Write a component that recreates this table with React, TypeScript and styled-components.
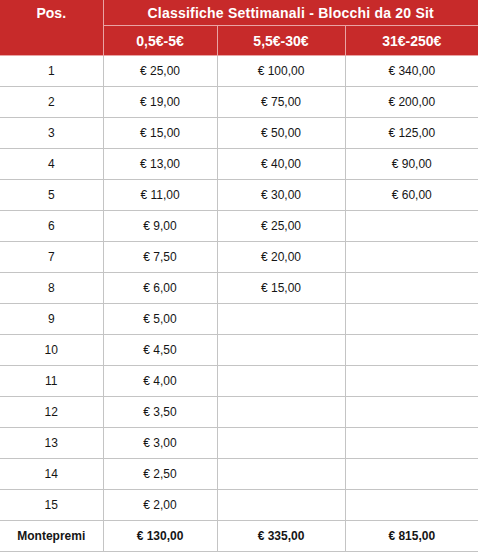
import React from "react";
import styled, { createGlobalStyle } from "styled-components";

const Global = createGlobalStyle`
  html, body { margin: 0; padding: 0; background: #ffffff; }
  body { font-family: Arial, "Liberation Sans", sans-serif; }
`;

const Table = styled.table`
  width: 478px;
  border-collapse: collapse;
  table-layout: fixed;
  font-family: Arial, "Liberation Sans", sans-serif;
`;

const HeadCell = styled.th<{ $h: number; $top?: boolean; $spacing?: number }>`
  background: #c72a2a;
  color: #ffffff;
  font-weight: bold;
  font-size: 14px;
  letter-spacing: ${(p) => p.$spacing ?? 0}px;
  text-align: center;
  vertical-align: ${(p) => (p.$top ? "top" : "middle")};
  height: ${(p) => p.$h}px;
  padding: ${(p) => (p.$top ? "5px 0 0" : "0")};
  border: 1px solid #e9a4a4;
  border-top: none;
  &:first-child { border-left: none; }
  &:last-child { border-right: none; }
`;

const Cell = styled.td<{ $bold?: boolean }>`
  height: 30px;
  padding: 0;
  text-align: center;
  font-size: 12px;
  font-weight: ${(p) => (p.$bold ? "bold" : "normal")};
  color: #151515;
  border: 1px solid #c4c4c4;
  &:first-child { border-left: none; }
  &:last-child { border-right: none; }
`;

const rows: [string, string, string, string][] = [
  ["1", "€ 25,00", "€ 100,00", "€ 340,00"],
  ["2", "€ 19,00", "€ 75,00", "€ 200,00"],
  ["3", "€ 15,00", "€ 50,00", "€ 125,00"],
  ["4", "€ 13,00", "€ 40,00", "€ 90,00"],
  ["5", "€ 11,00", "€ 30,00", "€ 60,00"],
  ["6", "€ 9,00", "€ 25,00", ""],
  ["7", "€ 7,50", "€ 20,00", ""],
  ["8", "€ 6,00", "€ 15,00", ""],
  ["9", "€ 5,00", "", ""],
  ["10", "€ 4,50", "", ""],
  ["11", "€ 4,00", "", ""],
  ["12", "€ 3,50", "", ""],
  ["13", "€ 3,00", "", ""],
  ["14", "€ 2,50", "", ""],
  ["15", "€ 2,00", "", ""],
];

export default function App() {
  return (
    <>
      <Global />
      <Table>
        <colgroup>
          <col style={{ width: 103 }} />
          <col style={{ width: 114 }} />
          <col style={{ width: 128 }} />
          <col style={{ width: 133 }} />
        </colgroup>
        <thead>
          <tr>
            <HeadCell rowSpan={2} $h={25} $top>Pos.</HeadCell>
            <HeadCell colSpan={3} $h={25} $spacing={0.22}>
              Classifiche Settimanali - Blocchi da 20 Sit
            </HeadCell>
          </tr>
          <tr>
            <HeadCell $h={29}>0,5€-5€</HeadCell>
            <HeadCell $h={29}>5,5€-30€</HeadCell>
            <HeadCell $h={29}>31€-250€</HeadCell>
          </tr>
        </thead>
        <tbody>
          {rows.map((r) => (
            <tr key={r[0]}>
              {r.map((c, i) => (
                <Cell key={i}>{c}</Cell>
              ))}
            </tr>
          ))}
          <tr>
            <Cell $bold>Montepremi</Cell>
            <Cell $bold>€ 130,00</Cell>
            <Cell $bold>€ 335,00</Cell>
            <Cell $bold>€ 815,00</Cell>
          </tr>
        </tbody>
      </Table>
    </>
  );
}
